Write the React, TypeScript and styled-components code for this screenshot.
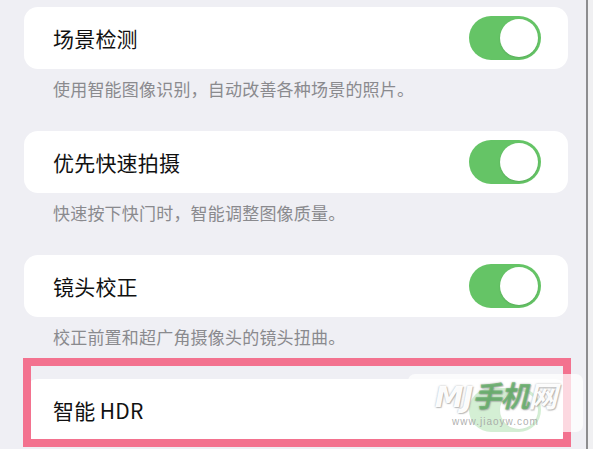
import React from 'react';
import styled, { createGlobalStyle } from 'styled-components';

const GlobalStyle = createGlobalStyle`
  html, body {
    margin: 0;
    padding: 0;
    background: #f0f0f2;
  }
  body {
    font-family: "Noto Sans CJK SC", "Noto Sans", sans-serif;
  }
`;

const Screen = styled.div`
  position: relative;
  width: 588px;
  height: 449px;
  overflow: hidden;
  box-sizing: border-box;
  background: #efeff4;
  border-right: 2px solid #8d8d8f;
  padding: 7px 18px 0 24px;
  display: flex;
  flex-direction: column;
`;

const Section = styled.section`
  display: flex;
  flex-direction: column;
  height: 124px;
  flex-shrink: 0;
`;

const Card = styled.div`
  height: 62px;
  box-sizing: border-box;
  background: #ffffff;
  border-radius: 14px;
  padding: 0 27px 0 29px;
  display: flex;
  align-items: center;
  justify-content: space-between;
`;

const Title = styled.span`
  font-size: 21px;
  color: #111111;
  letter-spacing: 0.2px;
`;

const Note = styled.p`
  margin: 0;
  padding: 8px 0 0 29px;
  font-size: 17px;
  line-height: 24px;
  color: #8a8a8e;
  letter-spacing: 0.2px;
`;

const Switch = styled.div<{ on: boolean }>`
  position: relative;
  width: 72px;
  height: 44px;
  border-radius: 22px;
  background: ${p => (p.on ? '#65c466' : '#e5e5ea')};
  flex-shrink: 0;
  &::after {
    content: '';
    position: absolute;
    top: 3px;
    ${p => (p.on ? 'right: 3px;' : 'left: 3px;')}
    width: 38px;
    height: 38px;
    border-radius: 50%;
    background: #ffffff;
    box-shadow: 0 1px 2px rgba(0, 0, 0, 0.12);
  }
`;

const Highlight = styled.div`
  position: absolute;
  left: 23px;
  top: 358px;
  width: 548px;
  height: 89px;
  box-sizing: border-box;
  border: 8px solid #f3728f;
  pointer-events: none;
`;

const Watermark = styled.div`
  position: absolute;
  left: 408px;
  top: 374px;
  width: 175px;
  height: 58px;
  border-radius: 7px;
  background: rgba(255, 255, 255, 0.72);
  display: flex;
  flex-direction: column;
  align-items: center;
  justify-content: center;
  gap: 1px;
  overflow: hidden;
`;

const MarkLogo = styled.div`
  font-family: "DejaVu Sans", "Noto Sans CJK SC", sans-serif;
  font-style: italic;
  font-weight: 700;
  font-size: 29px;
  line-height: 36px;
  height: 36px;
  color: rgba(255, 255, 255, 0.97);
  text-shadow: 0 0 2px rgba(120, 120, 120, 0.6), 1px 1px 1px rgba(150, 150, 150, 0.5);
  letter-spacing: -1px;
  span {
    color: rgba(90, 180, 95, 0.7);
  }
`;

const MarkUrl = styled.div`
  font-family: "Liberation Sans", sans-serif;
  font-size: 10px;
  line-height: 12px;
  color: rgba(160, 160, 160, 0.85);
  letter-spacing: 1px;
`;

const rows = [
  { title: '场景检测', note: '使用智能图像识别，自动改善各种场景的照片。' },
  { title: '优先快速拍摄', note: '快速按下快门时，智能调整图像质量。' },
  { title: '镜头校正', note: '校正前置和超广角摄像头的镜头扭曲。' },
  { title: '智能\u2009HDR', note: '' },
];

export default function App() {
  return (
    <>
      <GlobalStyle />
      <Screen>
        {rows.map(r => (
          <Section key={r.title}>
            <Card>
              <Title>{r.title}</Title>
              <Switch on />
            </Card>
            {r.note && <Note>{r.note}</Note>}
          </Section>
        ))}
        <Highlight />
        <Watermark>
          <MarkLogo>
            MJ<span>手机</span>网
          </MarkLogo>
          <MarkUrl>www.jiaoyw.com</MarkUrl>
        </Watermark>
      </Screen>
    </>
  );
}
